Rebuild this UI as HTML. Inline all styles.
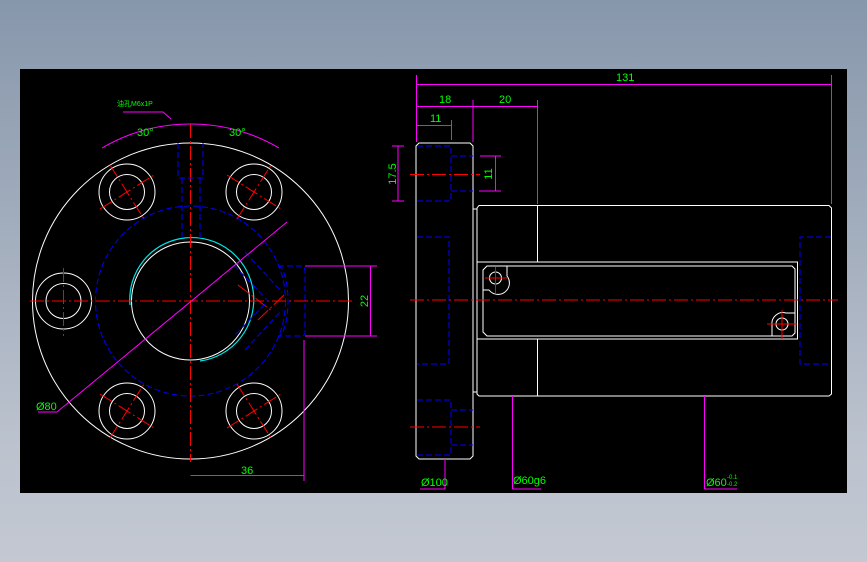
<!DOCTYPE html>
<html><head><meta charset="utf-8"><style>
html,body{margin:0;padding:0;width:867px;height:562px;overflow:hidden;background:linear-gradient(#8797ab,#bcc3ce 80%,#c3c8d2);}
svg{position:absolute;left:0;top:0}
text{font-family:"Liberation Sans","Noto Sans CJK SC",sans-serif;fill:#00ff00;font-size:11px}
</style></head><body>
<svg width="867" height="562" viewBox="0 0 867 562">
<rect x="20" y="69" width="827" height="424" fill="#000"/>
<g fill="none" stroke-width="1">
<!-- LEFT VIEW -->
<circle cx="190.5" cy="301" r="158" stroke="#fff"/>
<circle cx="190.5" cy="301" r="59" stroke="#fff"/>
<path d="M130,305 A62,62 0 1 1 200,361" stroke="#00e5e5" stroke-width="1.2"/>
<circle cx="190.5" cy="301" r="95" stroke="#0000ff" stroke-dasharray="6,3"/>
<g stroke="#fff">
<circle cx="127" cy="192" r="28"/><circle cx="127" cy="192" r="17.5"/>
<circle cx="254" cy="192" r="28"/><circle cx="254" cy="192" r="17.5"/>
<circle cx="63.5" cy="301" r="28"/><circle cx="63.5" cy="301" r="17.5"/>
<circle cx="127" cy="411" r="28"/><circle cx="127" cy="411" r="17.5"/>
<circle cx="254" cy="411" r="28"/><circle cx="254" cy="411" r="17.5"/>
</g>
<g stroke="#ff0000" stroke-dasharray="14,3,2,3">
<line x1="190.5" y1="124" x2="190.5" y2="462"/>
<line x1="30" y1="301" x2="352" y2="301"/>
<line x1="63.5" y1="268" x2="63.5" y2="336"/>
<line x1="110" y1="165" x2="144" y2="219"/><line x1="100" y1="209" x2="154" y2="175"/>
<line x1="237" y1="219" x2="271" y2="165"/><line x1="227" y1="175" x2="281" y2="209"/>
<line x1="110" y1="438" x2="144" y2="384"/><line x1="100" y1="394" x2="154" y2="428"/>
<line x1="237" y1="384" x2="271" y2="438"/><line x1="227" y1="428" x2="281" y2="394"/>
<line x1="238" y1="285" x2="272" y2="311"/><line x1="258" y1="320" x2="286" y2="293"/>
</g>
<g stroke="#0000ff" stroke-dasharray="6,3">
<path d="M178,143 V178 H203 V143"/><path d="M182,178 V241 M200,178 V241"/>
<path d="M278,266 H303 Q305,268 305,272 V334 L303,336 H278"/>
<path d="M245,252 L282,292 M245,350 L282,310 M234,265 L268,301 L234,336"/>
<path d="M278,266 A10,35 0 0 1 278,336"/>
</g>
<!-- magenta dims -->
<g stroke="#ff00ff">
<line x1="57" y1="412" x2="287" y2="222"/><line x1="38" y1="412" x2="57" y2="412"/>
<path d="M102,148 A175,175 0 0 1 279,148"/>
<line x1="305" y1="266" x2="377" y2="266"/><line x1="305" y1="336" x2="377" y2="336"/>
<line x1="370.5" y1="266" x2="370.5" y2="336"/>
<line x1="304" y1="340" x2="304" y2="481"/><line x1="190.5" y1="475.5" x2="304" y2="475.5"/>
<path d="M123,112 H163 L171,119"/>
<line x1="398" y1="146" x2="398" y2="201"/><line x1="392" y1="146" x2="404" y2="146"/><line x1="392" y1="201" x2="404" y2="201"/>
</g>
<!-- RIGHT VIEW -->
<g stroke="#fff">
<path d="M419,143 H470 L473,146 V456 L470,459 H419 L416,456 V146 Z"/>
<path d="M473,209 H477 M473,392 H477"/>
<path d="M479,205.5 H829 L831.5,208 V394 L829,396 H479 L477,394 V208 Z"/>
<line x1="537.5" y1="205.5" x2="537.5" y2="262"/><line x1="537.5" y1="339" x2="537.5" y2="396"/>
<rect x="477" y="262" width="320.5" height="77"/>
<path d="M487,266 H792 L795,269 V333 L792,336 H487 L483,332 V270 Z"/>
<path d="M483,290 H489 A9,9 0 0 0 507,276 V266"/>
<circle cx="495.5" cy="278" r="6"/>
<path d="M795,313 H786 A11,11 0 0 0 772,325 V336"/>
<circle cx="782" cy="324" r="6"/>
</g>
<g stroke="#0000ff" stroke-dasharray="6,3">
<path d="M417,146 H451 V201 H417"/><path d="M451,156 H473 M451,191 H473"/>
<path d="M417,237 H449 V364 H417"/>
<path d="M417,400 H451 V455 H417"/><path d="M451,410 H473 M451,445 H473"/>
<path d="M831,237 H800 V364 H831"/>
</g>
<g stroke="#ff0000" stroke-dasharray="14,3,2,3">
<line x1="410" y1="300" x2="838" y2="300"/>
<line x1="410" y1="174.5" x2="480" y2="174.5"/>
<line x1="410" y1="427" x2="480" y2="427"/>
</g>
<g stroke="#ff0000">
<line x1="485" y1="278" x2="508" y2="278"/><line x1="495.5" y1="267" x2="495.5" y2="293"/>
<line x1="767" y1="324" x2="797" y2="324"/><line x1="782" y1="310" x2="782" y2="339"/>
</g>
<g stroke="#ff00ff">
<line x1="416.5" y1="75" x2="416.5" y2="142"/><line x1="831.5" y1="75" x2="831.5" y2="204"/>
<line x1="416.5" y1="84.5" x2="831.5" y2="84.5"/>
<line x1="473" y1="100" x2="473" y2="142"/><line x1="537.5" y1="100" x2="537.5" y2="204"/>
<line x1="416.5" y1="106.5" x2="537.5" y2="106.5"/>
<line x1="451.5" y1="120" x2="451.5" y2="140"/><line x1="416.5" y1="125.5" x2="451.5" y2="125.5"/>
<line x1="480" y1="156" x2="501" y2="156"/><line x1="479" y1="191" x2="501" y2="191"/><line x1="495.5" y1="156" x2="495.5" y2="191"/>
<line x1="445" y1="459" x2="445" y2="489"/><line x1="420" y1="489" x2="445" y2="489"/>
<line x1="512.5" y1="396" x2="512.5" y2="489"/><line x1="512.5" y1="489" x2="541" y2="489"/>
<line x1="704.5" y1="396" x2="704.5" y2="489"/><line x1="704.5" y1="489" x2="737" y2="489"/>
</g>
</g>
<text x="36" y="410">Ø80</text>
<text x="137" y="136">30°</text>
<text x="229" y="136">30°</text>
<text x="117" y="106" style="font-size:7px">油孔M6x1P</text>
<text x="241" y="474">36</text>
<text transform="translate(368,301) rotate(-90)" text-anchor="middle">22</text>
<text transform="translate(396,174) rotate(-90)" text-anchor="middle">17.5</text>
<text transform="translate(492,174) rotate(-90)" text-anchor="middle">11</text>
<text x="616" y="81">131</text>
<text x="439" y="103">18</text>
<text x="499" y="103">20</text>
<text x="430" y="122">11</text>
<text x="421" y="486">Ø100</text>
<text x="513" y="484">Ø60g6</text>
<text x="706" y="486">Ø60</text>
<text x="727" y="479" style="font-size:6px">-0.1</text>
<text x="727" y="486" style="font-size:6px">-0.2</text>
</svg>
</body></html>
